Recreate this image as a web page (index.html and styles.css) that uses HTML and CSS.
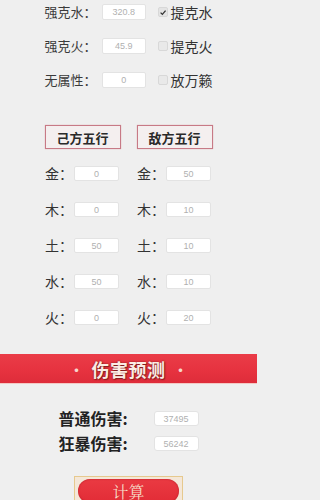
FILE: index.html
```html
<!DOCTYPE html>
<html lang="zh">
<head>
<meta charset="utf-8">
<link rel="stylesheet" href="styles.css">
</head>
<body>
<div class="page">
  <section class="opts">
    <div class="opt-row">
      <span class="opt-label">强克水：</span>
      <span class="field">320.8</span>
      <span class="check on"><svg viewBox="0 0 10 10" width="9" height="9"><path d="M2 5.2 L4.2 7.4 L8.2 2.6" fill="none" stroke="#333" stroke-width="1.6"/></svg></span>
      <span class="check-text">提克水</span>
    </div>
    <div class="opt-row">
      <span class="opt-label">强克火：</span>
      <span class="field">45.9</span>
      <span class="check"></span>
      <span class="check-text">提克火</span>
    </div>
    <div class="opt-row">
      <span class="opt-label">无属性：</span>
      <span class="field">0</span>
      <span class="check"></span>
      <span class="check-text">放万籁</span>
    </div>
  </section>

  <section class="sides">
    <div class="tab">己方五行</div>
    <div class="tab">敌方五行</div>
  </section>

  <section class="elements">
    <div class="el"><span class="el-label">金：</span><span class="field el-field">0</span></div>
    <div class="el"><span class="el-label">金：</span><span class="field el-field">50</span></div>
    <div class="el"><span class="el-label">木：</span><span class="field el-field">0</span></div>
    <div class="el"><span class="el-label">木：</span><span class="field el-field">10</span></div>
    <div class="el"><span class="el-label">土：</span><span class="field el-field">50</span></div>
    <div class="el"><span class="el-label">土：</span><span class="field el-field">10</span></div>
    <div class="el"><span class="el-label">水：</span><span class="field el-field">50</span></div>
    <div class="el"><span class="el-label">水：</span><span class="field el-field">10</span></div>
    <div class="el"><span class="el-label">火：</span><span class="field el-field">0</span></div>
    <div class="el"><span class="el-label">火：</span><span class="field el-field">20</span></div>
  </section>

  <div class="banner"><span class="dot">·</span><span class="banner-title">伤害预测</span><span class="dot">·</span></div>

  <section class="results">
    <div class="res-row"><span class="res-label">普通伤害:</span><span class="field res-field">37495</span></div>
    <div class="res-row"><span class="res-label">狂暴伤害:</span><span class="field res-field">56242</span></div>
  </section>

  <div class="calc-wrap">
    <div class="calc"><span class="calc-inner">计算</span></div>
  </div>
</div>
</body>
</html>
```

FILE: styles.css
```css
html, body {
  margin: 0;
  padding: 0;
  background: #efefef;
}
body {
  font-family: "Noto Sans CJK SC", "Noto Sans", sans-serif;
  color: #333;
  overflow: hidden;
}
.page {
  width: 257px;
  padding-top: 4px;
}
.opts {
  width: 168px;
  margin: 0 auto;
  display: flex;
  flex-direction: column;
  gap: 18px;
}
.opt-row {
  display: flex;
  align-items: center;
  height: 16px;
}
.opt-label {
  width: 58px;
  font-size: 13px;
  line-height: 16px;
  color: #3a3a3a;
  white-space: nowrap;
}
.field {
  display: flex;
  align-items: center;
  justify-content: center;
  box-sizing: border-box;
  background: #fff;
  border: 1px solid #e3e3e3;
  border-radius: 2px;
  font-family: "Liberation Sans", sans-serif;
  font-size: 9px;
  color: #b0b0b0;
}
.opt-row .field {
  width: 44px;
  height: 16px;
}
.check {
  width: 10px;
  height: 10px;
  box-sizing: border-box;
  margin-left: 12px;
  border: 1px solid #d8d8d8;
  border-radius: 2px;
  background: #e9e9e9;
  display: flex;
  align-items: center;
  justify-content: center;
}
.check.on {
  background: #e4e4e4;
}
.check-text {
  margin-left: 3px;
  font-size: 14px;
  line-height: 16px;
  color: #333;
  white-space: nowrap;
}
.sides {
  margin-top: 37px;
  display: flex;
  justify-content: center;
  gap: 16px;
}
.tab {
  width: 76px;
  height: 24px;
  box-sizing: border-box;
  border: 1.5px solid #c77a86;
  background: #f4efef;
  box-shadow: 0 0 1px #e0a0a8;
  display: flex;
  align-items: center;
  justify-content: center;
  font-size: 13px;
  font-weight: bold;
  color: #2a2a2a;
}
.elements {
  margin: 17px auto 0;
  width: 168px;
  display: grid;
  grid-template-columns: 76px 76px;
  column-gap: 16px;
  row-gap: 21px;
  margin-left: 45px;
}
.el {
  display: flex;
  align-items: center;
  height: 15px;
}
.el-label {
  width: 29px;
  font-size: 14px;
  line-height: 15px;
  color: #333;
  white-space: nowrap;
}
.el-field {
  width: 45px;
  height: 15px;
}
.banner {
  margin-top: 29px;
  height: 29px;
  background: linear-gradient(#ea3c48, #e6323f 60%, #de2c3a);
  border-bottom: 1px solid #f3c9c4;
  display: flex;
  align-items: center;
  justify-content: center;
  gap: 8px;
}
.banner-title {
  font-size: 18px;
  font-weight: bold;
  color: #fbece4;
  letter-spacing: 0.5px;
  text-shadow: 0 0 2px #7a1a1a, 1px 1px 1px #8a2020;
}
.dot {
  color: #f6d6cc;
  font-size: 14px;
  font-weight: bold;
}
.results {
  margin-top: 27px;
  display: flex;
  flex-direction: column;
  align-items: center;
  gap: 10px;
}
.res-row {
  display: flex;
  align-items: center;
  width: 140px;
  height: 15px;
}
.res-label {
  width: 95px;
  font-size: 16px;
  font-weight: bold;
  line-height: 15px;
  color: #222;
  white-space: nowrap;
}
.res-field {
  width: 45px;
  height: 15px;
  border-radius: 3px;
}
.calc-wrap {
  margin-top: 25px;
  display: flex;
  justify-content: center;
}
.calc {
  width: 109px;
  height: 30px;
  box-sizing: border-box;
  border: 1px solid #e6c98e;
  background: #f4e7d8;
  padding: 2px 3px;
  display: flex;
}
.calc-inner {
  flex: 1;
  border-radius: 13px;
  background: linear-gradient(#ea3a42, #e22c36);
  box-shadow: inset 0 0 2px #b01c26;
  display: flex;
  align-items: center;
  justify-content: center;
  font-family: "Noto Serif CJK SC", "Liberation Serif", serif;
  font-size: 16px;
  color: #f6dcc8;
}
```
